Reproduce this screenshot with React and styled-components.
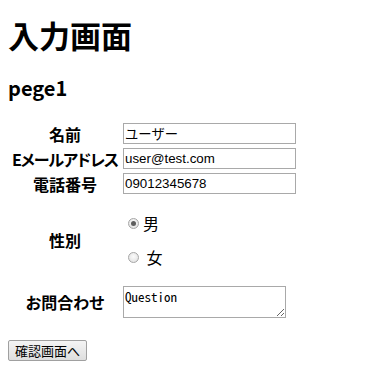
import React, { useState } from "react";
import styled, { createGlobalStyle } from "styled-components";

const GlobalStyle = createGlobalStyle`
  html, body {
    margin: 0;
    background: #fff;
  }
  body {
    font-family: "Noto Sans CJK JP", "Liberation Sans", sans-serif;
    color: #000;
  }
`;

const Page = styled.div`
  padding: 8px;
`;

const Title = styled.h1`
  margin: 7px 0 0;
  font-size: 31px;
  line-height: 40px;
  font-weight: bold;
`;

const PageName = styled.h2`
  margin: 21px 0 20px;
  font-size: 20px;
  line-height: 24px;
  font-weight: bold;
  font-family: "Noto Sans CJK JP", "Liberation Sans", sans-serif;
`;

const FormTable = styled.table`
  border-collapse: separate;
  border-spacing: 2px;
`;

const Label = styled.th`
  width: 108px;
  padding: 1px;
  font-size: 16px;
  line-height: 20px;
  font-weight: bold;
  text-align: center;
  vertical-align: middle;
  white-space: nowrap;
  font-feature-settings: "palt";
  letter-spacing: ${(p) => (p.$condensed ? "-1px" : "0")};
`;

const Cell = styled.td`
  padding: 1px;
  vertical-align: middle;
`;

const TextInput = styled.input`
  display: block;
  box-sizing: border-box;
  width: 173px;
  height: 21px;
  margin: 0;
  padding: 0 1px;
  border: 1px solid #a9a9a9;
  font-family: "Liberation Sans", "Noto Sans CJK JP", sans-serif;
  font-size: 13.33px;
  color: #000;
  background: #fff;
  outline: none;
`;

const RadioList = styled.div`
  display: flex;
  flex-direction: column;
  gap: 14px;
  padding: 15px 0;
`;

const Option = styled.label`
  display: flex;
  align-items: center;
  height: 20px;
  font-size: 16px;
  line-height: 20px;
  white-space: pre;
`;

const Radio = styled.input`
  appearance: none;
  box-sizing: border-box;
  width: 11px;
  height: 11px;
  margin: 0 4px 0 5px;
  border: 1px solid #a6a6a6;
  border-radius: 50%;
  background: radial-gradient(circle at 50% 40%, #fbfbfb 0%, #e6e6e6 70%, #d4d4d4 100%);
  position: relative;

  &:checked::after {
    content: "";
    position: absolute;
    left: 2px;
    top: 2px;
    width: 5px;
    height: 5px;
    border-radius: 50%;
    background: #5e5e5e;
  }
`;

const Message = styled.textarea`
  display: block;
  box-sizing: border-box;
  width: 163px;
  height: 32px;
  margin: 0;
  padding: 2px 1px;
  border: 1px solid #a9a9a9;
  font-family: "Noto Sans Mono CJK JP", "Liberation Mono", monospace;
  font-size: 13px;
  line-height: 15px;
  color: #000;
  resize: both;
  outline: none;
`;

const SubmitButton = styled.button`
  display: block;
  margin-top: 19px;
  height: 21px;
  padding: 0 6px;
  border: 1px solid #a0a0a0;
  border-radius: 2px;
  background: linear-gradient(#f4f4f4, #dedede);
  font-family: "Noto Sans CJK JP", sans-serif;
  font-size: 13px;
  line-height: 19px;
  color: #000;
`;

export default function App() {
  const [gender, setGender] = useState("male");
  const [form, setForm] = useState({
    name: "ユーザー",
    email: "user@test.com",
    tel: "09012345678",
    question: "Question",
  });
  const change = (key) => (e) => setForm({ ...form, [key]: e.target.value });

  return (
    <Page>
      <GlobalStyle />
      <Title>入力画面</Title>
      <PageName>pege1</PageName>
      <FormTable>
        <tbody>
          <tr>
            <Label>名前</Label>
            <Cell>
              <TextInput value={form.name} onChange={change("name")} />
            </Cell>
          </tr>
          <tr>
            <Label $condensed>Eメールアドレス</Label>
            <Cell>
              <TextInput value={form.email} onChange={change("email")} />
            </Cell>
          </tr>
          <tr>
            <Label>電話番号</Label>
            <Cell>
              <TextInput value={form.tel} onChange={change("tel")} />
            </Cell>
          </tr>
          <tr>
            <Label>性別</Label>
            <Cell>
              <RadioList>
                <Option>
                  <Radio
                    type="radio"
                    name="gender"
                    checked={gender === "male"}
                    onChange={() => setGender("male")}
                  />
                  男
                </Option>
                <Option>
                  <Radio
                    type="radio"
                    name="gender"
                    checked={gender === "female"}
                    onChange={() => setGender("female")}
                  />
                  {" 女"}
                </Option>
              </RadioList>
            </Cell>
          </tr>
          <tr>
            <Label>お問合わせ</Label>
            <Cell>
              <Message value={form.question} onChange={change("question")} />
            </Cell>
          </tr>
        </tbody>
      </FormTable>
      <SubmitButton type="button">確認画面へ</SubmitButton>
    </Page>
  );
}
